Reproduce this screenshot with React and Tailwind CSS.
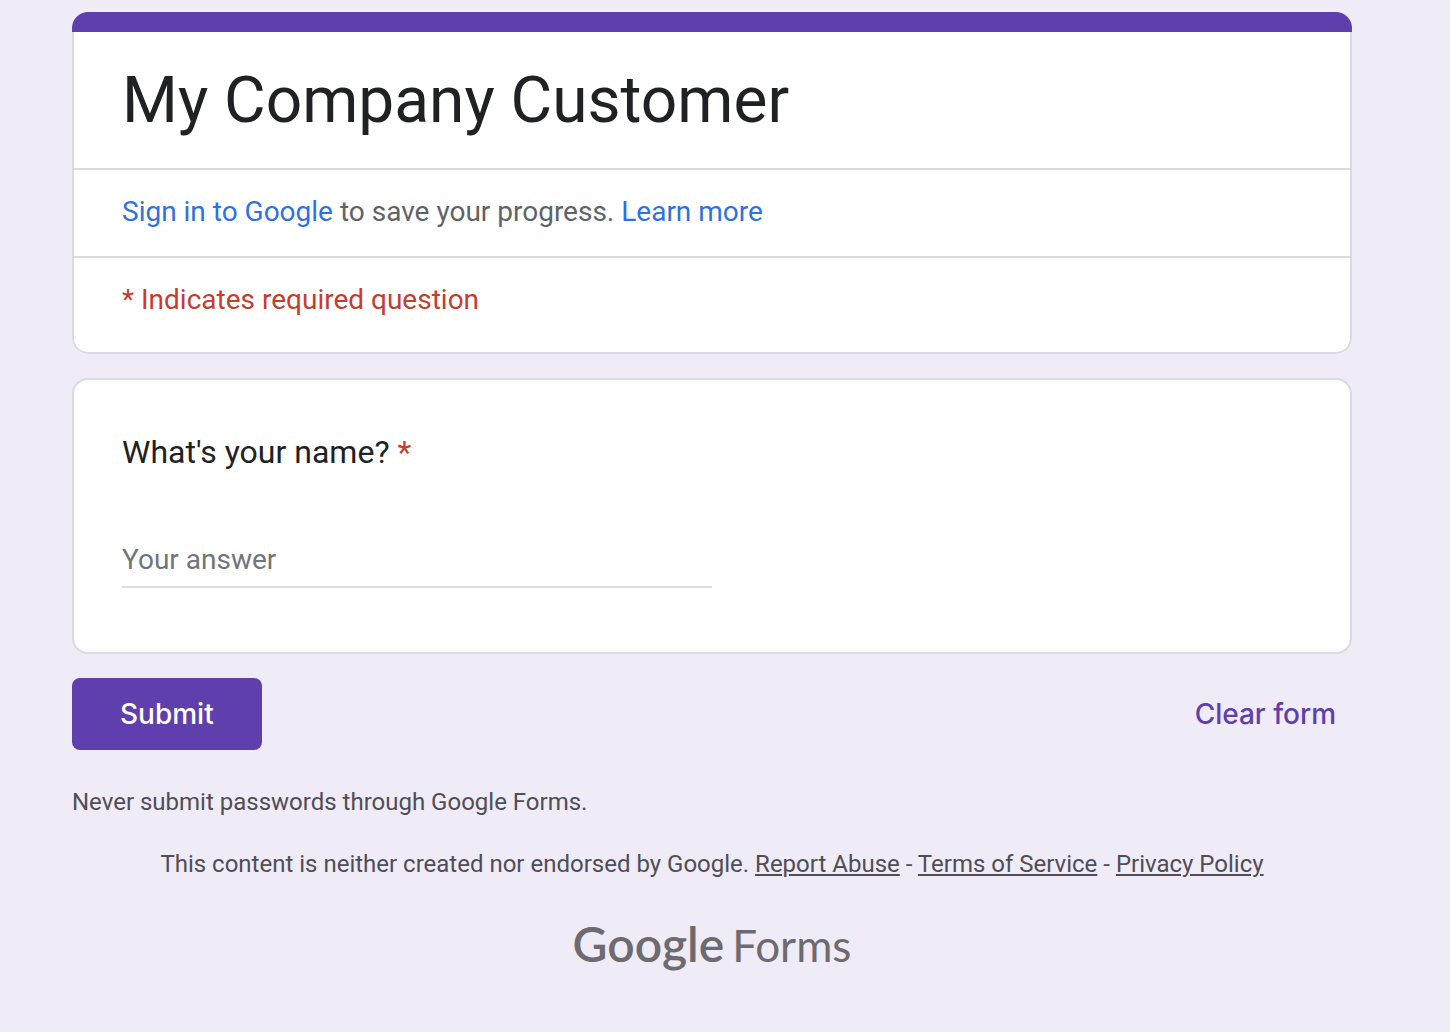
import React, { useState } from 'react';

const FOOTER_LINKS = ['Report Abuse', 'Terms of Service', 'Privacy Policy'];

export default function App() {
    const [name, setName] = useState('');

    return (
        <div className="min-h-screen bg-[#efebf7] pt-3 pb-12 pl-[72px] pr-[98px] font-['Roboto',sans-serif]">
            <form onSubmit={(e) => e.preventDefault()}>
                <FormHeader title="My Company Customer" />
                <TextQuestion id="name" label="What's your name?" value={name} onChange={setName} />
                <FormActions onClear={() => setName('')} />
            </form>
            <FormFooter />
        </div>
    );
}

function FormHeader({ title }) {
    return (
        <header className="overflow-hidden rounded-2xl bg-white">
            <div className="h-5 bg-[#5f3fae]" />
            <div className="rounded-b-2xl border-2 border-t-0 border-[#dadae0]">
                <h1 className="px-12 pt-7 pb-[26px] text-[64px] leading-[82px] text-[#202124]">{title}</h1>
                <p className="border-t-2 border-[#dadae0] px-12 pt-[22px] pb-6 text-[28px] leading-10 text-[#5f6368]">
                    <a href="#signin" className="text-[#3071e0]">Sign in to Google</a> to save your progress.{' '}
                    <a href="#learn" className="text-[#3071e0]">Learn more</a>
                </p>
                <p className="border-t-2 border-[#dadae0] px-12 pt-[22px] pb-8 text-[28px] leading-10 text-[#c63d2f]">
                    * Indicates required question
                </p>
            </div>
        </header>
    );
}

function TextQuestion({ id, label, value, onChange }) {
    return (
        <section className="mt-6 rounded-2xl border-2 border-[#dadae0] bg-white px-12 pt-12 pb-16">
            <label htmlFor={id} className="block text-[32px] leading-12 text-[#202124]">
                {label} <span className="text-[#c63d2f]">*</span>
            </label>
            <input
                id={id}
                type="text"
                required
                placeholder="Your answer"
                value={value}
                onChange={(e) => onChange(e.target.value)}
                className="mt-14 block h-14 w-1/2 border-b-2 border-[#dadce0] text-[28px] outline-none placeholder:text-[#70757a]"
            />
        </section>
    );
}

function FormActions({ onClear }) {
    return (
        <div className="mt-6 flex items-center justify-between font-['Inter',sans-serif] text-[28px] font-medium">
            <button type="submit" className="h-18 rounded-lg bg-[#5f3fae] px-12 text-white">Submit</button>
            <button type="button" onClick={onClear} className="px-4 text-[#5f3fae]">Clear form</button>
        </div>
    );
}

function FormFooter() {
    return (
        <footer className="mt-8 text-[24px] leading-10 text-[#504d56]">
            <p>Never submit passwords through Google Forms.</p>
            <p className="mt-[22px] text-center">
                This content is neither created nor endorsed by Google.{' '}
                {FOOTER_LINKS.map((link, i) => (
                    <React.Fragment key={link}>
                        {i > 0 && ' - '}
                        <a href="#policy" className="underline">{link}</a>
                    </React.Fragment>
                ))}
            </p>
            <FormsLogo />
        </footer>
    );
}

function FormsLogo() {
    return (
        <a
            href="#forms"
            className="mt-8 flex items-baseline justify-center gap-2 font-['Lato',sans-serif] text-[44px] leading-14 text-[#6d6a70]"
        >
            <span className="text-[48px] font-semibold">Google</span>
            <span>Forms</span>
        </a>
    );
}
